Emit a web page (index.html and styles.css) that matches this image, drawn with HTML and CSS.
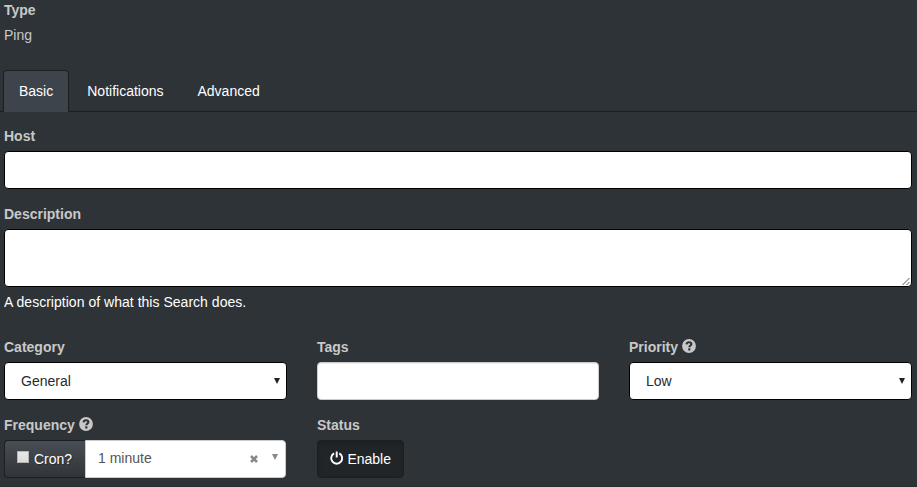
FILE: index.html
```html
<!DOCTYPE html>
<html lang="en">
<head>
<meta charset="utf-8">
<title>Edit Search</title>
<link rel="stylesheet" href="styles.css">
</head>
<body>
<svg width="0" height="0" class="sprite">
  <symbol id="help" viewBox="0 0 14 14"><circle cx="7" cy="7" r="6.9" fill="#c8c8c8"/><path d="M4.500 5.400C4.700 3.900 5.700 3.200 7 3.200c1.400 0 2.400.7 2.400 1.900 0 1.600-2.100 1.500-2.100 3.200" fill="none" stroke="#2e3338" stroke-width="2.100"/><path d="M6.200 9.300h2.200v2.200H6.200z" fill="#2e3338"/></symbol>
</svg>
<form class="search-form">
  <div class="group type">
    <label>Type</label>
    <div>Ping</div>
  </div>
  <nav class="tabs">
    <a class="tab active">Basic</a>
    <a class="tab">Notifications</a>
    <a class="tab">Advanced</a>
  </nav>
  <div class="group">
    <label>Host</label>
    <div class="control"></div>
  </div>
  <div class="group">
    <label>Description</label>
    <div class="control area">
      <svg width="9" height="9" viewBox="0 0 9 9"><path d="M.5 8L7.500 1M4.500 8L7.500 5" stroke="#555" stroke-width="1" fill="none"/></svg>
    </div>
    <div class="help-text">A description of what this Search does.</div>
  </div>
  <div class="columns">
    <div>
      <label>Category</label>
      <div class="control select"><span>General</span><i class="arrow"></i></div>
    </div>
    <div>
      <label>Tags</label>
      <div class="control tags"></div>
    </div>
    <div>
      <label>Priority <svg class="help" width="14" height="14"><use href="#help"/></svg></label>
      <div class="control select"><span>Low</span><i class="arrow"></i></div>
    </div>
    <div>
      <label>Frequency <svg class="help" width="14" height="14"><use href="#help"/></svg></label>
      <div class="frequency">
        <div class="cron"><i class="checkbox"></i><span>Cron?</span></div>
        <div class="interval">
          <span>1 minute</span>
          <svg class="clear" width="8" height="8" viewBox="0 0 8 8"><path d="M1 1l6 6M7 1L1 7" stroke="#888" stroke-width="2.500"/></svg>
          <i class="arrow light"></i>
        </div>
      </div>
    </div>
    <div>
      <label>Status</label>
      <div class="enable"><svg width="14" height="14" viewBox="0 0 14 14"><path d="M4.300 2.200A5.700 5.700 0 1 0 9.700 2.200M7 .3v6.200" fill="none" stroke="#fff" stroke-width="2"/></svg><span>Enable</span></div>
    </div>
  </div>
</form>
</body>
</html>
```

FILE: styles.css
```css
* { box-sizing: border-box; }
body {
  margin: 0;
  height: 487px;
  overflow: hidden;
  background: #2e3338;
  color: #c8c8c8;
  font: 14px/20px "Liberation Sans", Arial, sans-serif;
}
.sprite { position: absolute; }
.search-form { height: 487px; border-bottom: 1px solid #292b2f; }
.group { padding: 0 5px 0 4px; margin-bottom: 15px; }
.type { margin-bottom: 25px; }
label { display: block; height: 20px; margin-bottom: 5px; font-weight: bold; }
.tabs {
  display: flex;
  gap: 2px;
  height: 42px;
  padding-left: 3px;
  margin-bottom: 14px;
  border-bottom: 1px solid #1c1e22;
}
.tab {
  height: 42px;
  padding: 10px 15px;
  border: 1px solid transparent;
  border-bottom: 0;
  border-radius: 4px 4px 0 0;
  color: #fff;
}
.active { background: #3e444c; border-color: #1c1e22; }
.control {
  display: flex;
  height: 38px;
  border: 1px solid #000;
  border-radius: 4px;
  background: #fff;
  color: #272b30;
}
.area { height: 58px; align-items: flex-end; justify-content: flex-end; }
.help-text { margin-top: 5px; color: #fff; letter-spacing: .025px; }
.columns {
  display: grid;
  grid-template-columns: 283px 282px 283px;
  gap: 15px 30px;
  padding-left: 4px;
  margin-top: 25px;
}
.select { align-items: center; justify-content: space-between; padding: 0 6px 0 16px; }
.arrow {
  width: 6px;
  height: 6px;
  background: #222;
  clip-path: polygon(0 0, 100% 0, 50% 100%);
}
.tags { border-color: #ccc; box-shadow: inset 0 1px 1px rgba(0, 0, 0, .075); }
.help { vertical-align: -1px; }
.frequency { display: flex; width: 282px; height: 38px; }
.cron {
  display: flex;
  width: 81px;
  padding: 8px 0 0 12px;
  border: 1px solid #1c1e22;
  border-right: 0;
  border-radius: 4px 0 0 4px;
  background: linear-gradient(#484e55, #3a3f44 60%, #313539);
  color: #fff;
  text-shadow: 1px 1px 1px rgba(0, 0, 0, .3);
}
.checkbox {
  width: 12px;
  height: 12px;
  margin: 2px 5px 0 0;
  border: 1px solid #b5b5b5;
  background: linear-gradient(#e7e7e7, #dcdcdc);
}
.interval {
  display: flex;
  flex: 1;
  padding: 7px 7px 0 12px;
  border: 1px solid #ccc;
  border-radius: 0 4px 4px 0;
  background: #fff;
  color: #555;
}
.interval span { flex: 1; }
.clear { margin: 7px 14px 0 0; }
.light { margin-top: 6px; background: #888; }
.enable {
  display: flex;
  width: 87px;
  height: 38px;
  padding: 8px 12px;
  border: 1px solid #1c1e22;
  border-radius: 4px;
  background: #222528;
  box-shadow: inset 0 3px 5px rgba(0, 0, 0, .125);
  color: #fff;
}
.enable svg { margin: 2px 4px 0 0; }
```
